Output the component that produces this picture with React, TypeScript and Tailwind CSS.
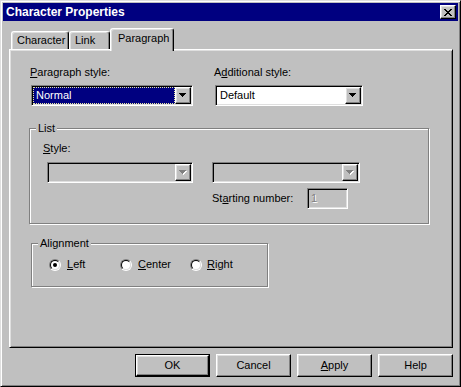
import React from 'react';

const raised =
  'border border-t-white border-l-white border-r-black border-b-black shadow-[inset_-1px_-1px_#808080,inset_1px_1px_#dfdfdf]';
const sunken =
  'border border-t-[#808080] border-l-[#808080] border-r-white border-b-white shadow-[inset_1px_1px_#000,inset_-1px_-1px_#dfdfdf] p-[1px]';
const etched = 'relative border border-[#808080] shadow-[inset_1px_1px_#fff,1px_1px_#fff]';

const Arrow: React.FC<{ disabled?: boolean }> = ({ disabled }) => (
  <svg width="8" height="5" viewBox="0 0 8 5" shapeRendering="crispEdges">
    {disabled && (
      <g fill="#fff">
        <rect x="1" y="1" width="7" height="1" />
        <rect x="2" y="2" width="5" height="1" />
        <rect x="3" y="3" width="3" height="1" />
        <rect x="4" y="4" width="1" height="1" />
      </g>
    )}
    <g fill={disabled ? '#808080' : '#000'}>
      <rect x="0" y="0" width="7" height="1" />
      <rect x="1" y="1" width="5" height="1" />
      <rect x="2" y="2" width="3" height="1" />
      <rect x="3" y="3" width="1" height="1" />
    </g>
  </svg>
);

const Select: React.FC<{ width: string; disabled?: boolean; children?: React.ReactNode }> = ({ width, disabled, children }) => (
  <div className={`${sunken} ${width} h-[21px] flex ${disabled ? 'bg-[#c0c0c0]' : 'bg-white'}`}>
    <div className="flex-1 flex min-w-0">{children}</div>
    <div className={`${raised} w-[16px] h-full bg-[#c0c0c0] flex items-center justify-center`}>
      <Arrow disabled={disabled} />
    </div>
  </div>
);

const Radio: React.FC<{ checked?: boolean }> = ({ checked }) => (
  <div className="w-[12px] h-[12px] rounded-full border border-t-[#808080] border-l-[#808080] border-r-white border-b-white">
    <div className="w-full h-full rounded-full border border-t-black border-l-black border-r-[#dfdfdf] border-b-[#dfdfdf] bg-white flex items-center justify-center">
      {checked && <div className="w-[4px] h-[4px] rounded-full bg-black" />}
    </div>
  </div>
);

const Button: React.FC<{ children: React.ReactNode; primary?: boolean }> = ({ children, primary }) =>
  primary ? (
    <div className="w-[75px] h-[23px] border border-black">
      <div className={`${raised} w-full h-full flex items-center justify-center`}>{children}</div>
    </div>
  ) : (
    <div className={`${raised} w-[75px] h-[23px] flex items-center justify-center`}>{children}</div>
  );

export default function App() {
  return (
    <div className="w-[461px] h-[387px] bg-[#c0c0c0] border border-t-[#dfdfdf] border-l-[#dfdfdf] border-r-black border-b-black shadow-[inset_1px_1px_#fff,inset_-1px_-1px_#808080] p-[2px] flex flex-col text-[11px] leading-[13px] text-black font-['Liberation_Sans',Arial,sans-serif]">
      {/* title bar */}
      <div className="h-[18px] bg-[#000080] flex items-center justify-between pl-[3px] pr-[2px]">
        <span className="text-white font-bold text-[12px]">Character Properties</span>
        <div className={`${raised} bg-[#c0c0c0] w-[16px] h-[14px] flex items-center justify-center`}>
          <svg width="8" height="7" viewBox="0 0 8 7" shapeRendering="crispEdges">
            <path d="M0 0h2v1h1v1h2V1h1V0h2v1H7v1H6v1H5v1h1v1h1v1h1v1H6V6H5V5H3v1H2v1H0V6h1V5h1V4h1V3H2V2H1V1H0z" fill="#000" />
          </svg>
        </div>
      </div>

      {/* tabs */}
      <div className="mt-[7px] flex items-end pl-[8px]">
        <div className={`w-[58px] h-[18px] border-l border-t border-r border-t-white border-l-white border-r-black rounded-t-[3px] shadow-[inset_-1px_0_#808080,inset_1px_1px_#dfdfdf] flex items-center pl-[5px]`}>
          Character
        </div>
        <div className={`w-[41px] h-[18px] border-l border-t border-r border-t-white border-l-white border-r-black rounded-t-[3px] shadow-[inset_-1px_0_#808080,inset_1px_1px_#dfdfdf] flex items-center pl-[5px]`}>
          Link
        </div>
        <div className="relative z-10 w-[64px] h-[23px] -mb-[2px] bg-[#c0c0c0] border-l border-t border-r border-t-white border-l-white border-r-black rounded-t-[3px] shadow-[inset_-1px_0_#808080,inset_1px_1px_#dfdfdf] flex items-center pl-[7px] pb-[3px]">
          Paragraph
        </div>
      </div>

      {/* panel */}
      <div className="ml-[6px] w-[444px] h-[299px] border border-t-white border-l-white border-r-black border-b-black shadow-[inset_1px_1px_#dfdfdf,inset_-1px_-1px_#808080] flex flex-col">
        <div className="ml-[21px] mt-[16px] flex gap-[22px]">
          <div className="flex flex-col">
            <span className="-ml-[1px] mb-[6px]">
              <u>P</u>aragraph style:
            </span>
            <Select width="w-[162px]">
              <div className="flex-1 bg-[#000080] border border-dotted border-[#e8e8a0] text-white pl-[2px] flex items-center">
                Normal
              </div>
            </Select>
          </div>
          <div className="flex flex-col">
            <span className="-ml-[1px] mb-[6px]">
              A<u>d</u>ditional style:
            </span>
            <Select width="w-[148px]">
              <div className="flex-1 pl-[3px] flex items-center">Default</div>
            </Select>
          </div>
        </div>

        {/* List group */}
        <div className={`${etched} ml-[19px] mt-[22px] w-[400px] h-[96px]`}>
          <span className="absolute -top-[7px] left-[6px] bg-[#c0c0c0] px-[2px]">List</span>
          <div className="pl-[13px] pt-[13px]">
            <u>S</u>tyle:
          </div>
          <div className="ml-[17px] mt-[7px] flex gap-[19px]">
            <Select width="w-[146px]" disabled />
            <Select width="w-[148px]" disabled />
          </div>
          <div className="ml-[182px] mt-[5px] flex items-center">
            <span className="w-[95px]">
              St<u>a</u>rting number:
            </span>
            <div className={`${sunken} w-[41px] h-[21px] flex items-center pl-[3px] text-[#808080] [text-shadow:1px_1px_#fff]`}>1</div>
          </div>
        </div>

        {/* Alignment group */}
        <div className={`${etched} ml-[21px] mt-[19px] w-[237px] h-[44px]`}>
          <span className="absolute -top-[7px] left-[6px] bg-[#c0c0c0] px-[2px]">Alignment</span>
          <div className="pl-[17px] pt-[14px] flex items-center">
            <div className="w-[71px] flex items-center gap-[6px]">
              <Radio checked />
              <span>
                <u>L</u>eft
              </span>
            </div>
            <div className="w-[70px] flex items-center gap-[6px]">
              <Radio />
              <span>
                <u>C</u>enter
              </span>
            </div>
            <div className="flex items-center gap-[5px]">
              <Radio />
              <span>
                <u>R</u>ight
              </span>
            </div>
          </div>
        </div>
      </div>

      {/* buttons */}
      <div className="ml-[6px] w-[444px] mt-[6px] flex justify-end gap-[6px]">
        <Button primary>OK</Button>
        <Button>Cancel</Button>
        <Button>
          <span>
            <u>A</u>pply
          </span>
        </Button>
        <Button>Help</Button>
      </div>
    </div>
  );
}
